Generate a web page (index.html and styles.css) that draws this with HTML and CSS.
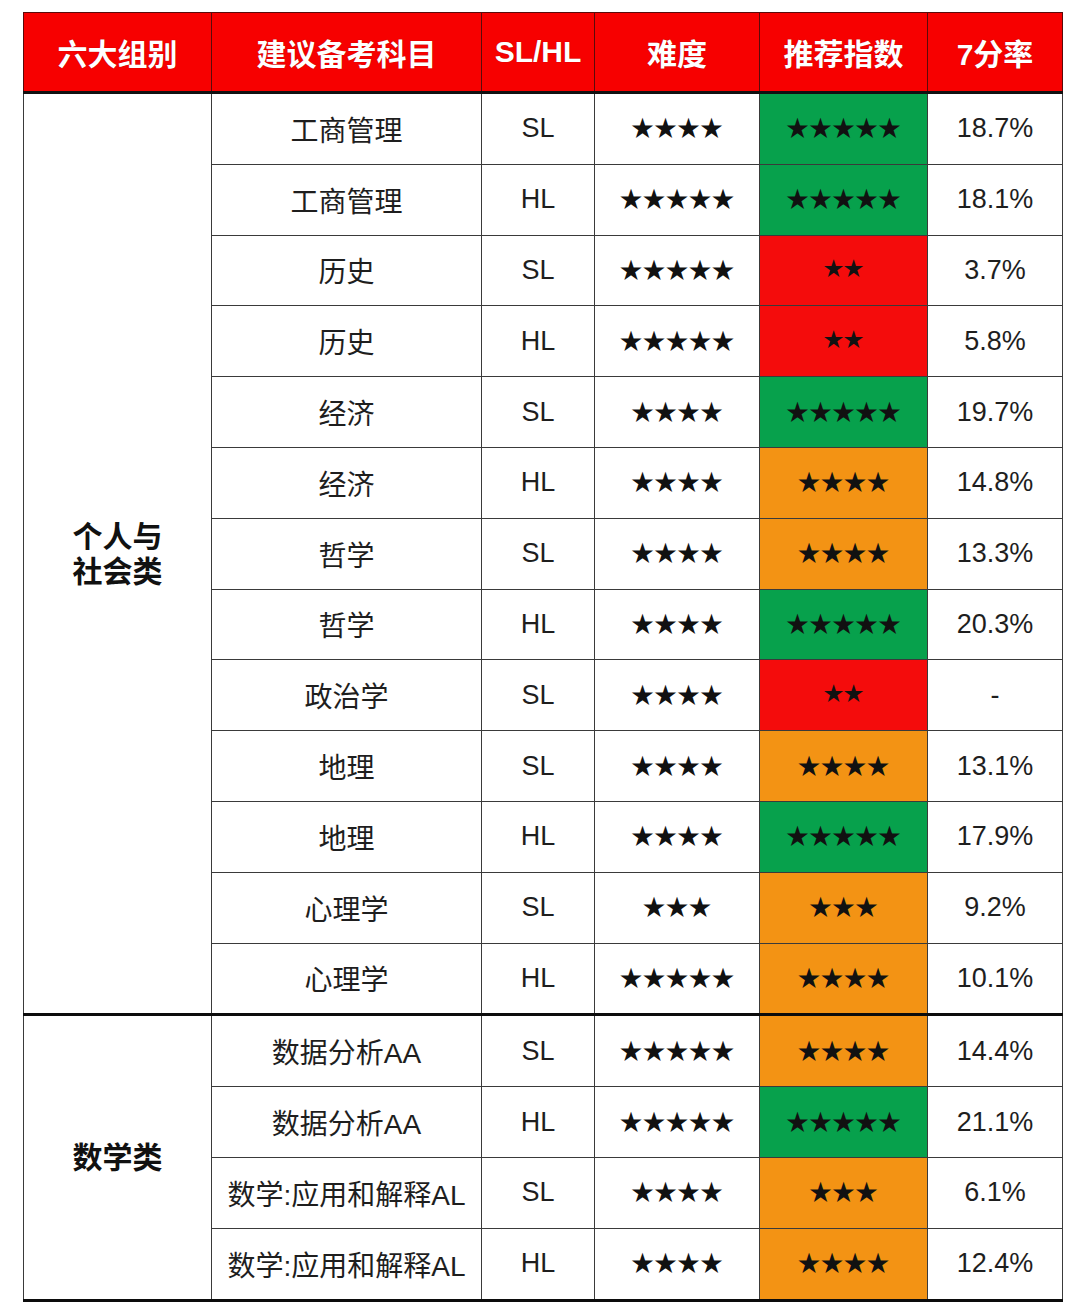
FILE: index.html
```html
<!DOCTYPE html>
<html lang="zh">
<head>
<meta charset="utf-8">
<title>IB 科目推荐</title>
<link rel="stylesheet" href="styles.css">
</head>
<body>
<div class="wrap">
<table class="grid">
  <colgroup>
    <col class="c1"><col class="c2"><col class="c3"><col class="c4"><col class="c5"><col class="c6">
  </colgroup>
  <thead>
    <tr><th>六大组别</th><th>建议备考科目</th><th>SL/HL</th><th>难度</th><th>推荐指数</th><th>7分率</th></tr>
  </thead>
  <tbody class="grp">
    <tr><td class="group" rowspan="13">个人与<br>社会类</td><td class="subj">工商管理</td><td>SL</td><td class="star">★★★★</td><td class="star g">★★★★★</td><td>18.7%</td></tr>
    <tr><td class="subj">工商管理</td><td>HL</td><td class="star">★★★★★</td><td class="star g">★★★★★</td><td>18.1%</td></tr>
    <tr><td class="subj">历史</td><td>SL</td><td class="star">★★★★★</td><td class="star r">★★</td><td>3.7%</td></tr>
    <tr><td class="subj">历史</td><td>HL</td><td class="star">★★★★★</td><td class="star r">★★</td><td>5.8%</td></tr>
    <tr><td class="subj">经济</td><td>SL</td><td class="star">★★★★</td><td class="star g">★★★★★</td><td>19.7%</td></tr>
    <tr><td class="subj">经济</td><td>HL</td><td class="star">★★★★</td><td class="star o">★★★★</td><td>14.8%</td></tr>
    <tr><td class="subj">哲学</td><td>SL</td><td class="star">★★★★</td><td class="star o">★★★★</td><td>13.3%</td></tr>
    <tr><td class="subj">哲学</td><td>HL</td><td class="star">★★★★</td><td class="star g">★★★★★</td><td>20.3%</td></tr>
    <tr><td class="subj">政治学</td><td>SL</td><td class="star">★★★★</td><td class="star r">★★</td><td>-</td></tr>
    <tr><td class="subj">地理</td><td>SL</td><td class="star">★★★★</td><td class="star o">★★★★</td><td>13.1%</td></tr>
    <tr><td class="subj">地理</td><td>HL</td><td class="star">★★★★</td><td class="star g">★★★★★</td><td>17.9%</td></tr>
    <tr><td class="subj">心理学</td><td>SL</td><td class="star">★★★</td><td class="star o">★★★</td><td>9.2%</td></tr>
    <tr><td class="subj">心理学</td><td>HL</td><td class="star">★★★★★</td><td class="star o">★★★★</td><td>10.1%</td></tr>
  </tbody>
  <tbody class="grp">
    <tr><td class="group" rowspan="4">数学类</td><td class="subj">数据分析AA</td><td>SL</td><td class="star">★★★★★</td><td class="star o">★★★★</td><td>14.4%</td></tr>
    <tr><td class="subj">数据分析AA</td><td>HL</td><td class="star">★★★★★</td><td class="star g">★★★★★</td><td>21.1%</td></tr>
    <tr><td class="subj">数学:应用和解释AL</td><td>SL</td><td class="star">★★★★</td><td class="star o">★★★</td><td>6.1%</td></tr>
    <tr><td class="subj">数学:应用和解释AL</td><td>HL</td><td class="star">★★★★</td><td class="star o">★★★★</td><td>12.4%</td></tr>
  </tbody>
</table>
</div>
</body>
</html>
```
FILE: styles.css
```css
html, body {
  margin: 0;
  padding: 0;
  background: #ffffff;
}
.wrap {
  padding: 12px 0 0 23px;
}
.grid {
  border-collapse: collapse;
  table-layout: fixed;
  width: 1039px;
  font-family: "Liberation Sans", "Noto Sans CJK SC", sans-serif;
  color: #1e1e1e;
}
.c1 { width: 188px; }
.c2 { width: 270px; }
.c3 { width: 113px; }
.c4 { width: 165px; }
.c5 { width: 168px; }
.c6 { width: 135px; }
.grid th {
  height: 78px;
  background: #f70000;
  color: #ffffff;
  font-size: 30px;
  font-weight: bold;
  text-shadow: 0 0 1px rgba(90, 0, 0, 0.6);
  border: 1.5px solid #5a0a0a;
  border-bottom: 3px solid #111;
  padding: 0;
  text-align: center;
  vertical-align: middle;
}
.grid td {
  height: 69.8px;
  border: 1.5px solid #3a3a3a;
  padding: 0;
  text-align: center;
  vertical-align: middle;
  font-size: 27px;
  background: #ffffff;
}
.grid td.subj {
  font-size: 28px;
}
.grid tbody.grp tr:last-child td,
.grid td.group {
  border-bottom: 3px solid #0c0c0c;
}
.grid td.group {
  font-weight: bold;
  font-size: 30px;
  line-height: 35px;
  color: #111;
}
.grid td.star {
  font-family: "Noto Sans CJK SC", sans-serif;
  font-size: 23px;
  line-height: 1;
  padding-bottom: 4px;
  height: 65.8px;
  color: #111;
}
.grid td.g { background: #07a14c; }
.grid td.r { background: #f40c0c; font-size: 20px; }
.grid td.o { background: #f39314; }
```
